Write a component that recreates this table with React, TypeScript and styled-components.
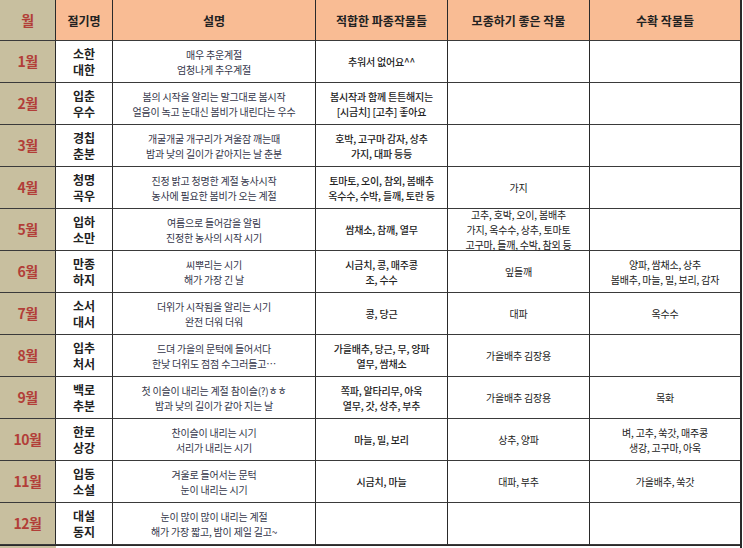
import styled, {createGlobalStyle} from "styled-components";

const GlobalStyle = createGlobalStyle`
  html, body {
    margin: 0;
    padding: 0;
    background: #ffffff;
  }
  body {
    font-family: "Noto Sans CJK KR", "Noto Sans", sans-serif;
  }
`

type Row = {
  month: string
  terms: string[]
  desc: string[]
  sow: string[]
  seedling: string[]
  harvest: string[]
}

const rows: Row[] = [
  {month: '1월', terms: ['소한', '대한'], desc: ['매우 추운계절', '엄청나게 추우계절'], sow: ['추워서 없어요^^'], seedling: [], harvest: []},
  {month: '2월', terms: ['입춘', '우수'], desc: ['봄의 시작을 알리는 말그대로 봄시작', '얼음이 녹고 눈대신 봄비가 내린다는 우수'], sow: ['봄시작과 함께 튼튼해지는', '[시금치] [고추] 좋아요'], seedling: [], harvest: []},
  {month: '3월', terms: ['경칩', '춘분'], desc: ['개굴개굴 개구리가 겨울잠 깨는때', '밤과 낮의 길이가 같아지는 날 춘분'], sow: ['호박, 고구마 감자, 상추', '가지, 대파 등등'], seedling: [], harvest: []},
  {month: '4월', terms: ['청명', '곡우'], desc: ['진정 밝고 청명한 계절 농사시작', '농사에 필요한 봄비가 오는 계절'], sow: ['토마토, 오이, 참외, 봄배추', '옥수수, 수박, 들깨, 토란 등'], seedling: ['가지'], harvest: []},
  {month: '5월', terms: ['입하', '소만'], desc: ['여름으로 들어감을 알림', '진정한 농사의 시작 시기'], sow: ['쌈채소, 참깨, 열무'], seedling: ['고추, 호박, 오이, 봄배추', '가지, 옥수수, 상추, 토마토', '고구마, 들깨, 수박, 참외 등'], harvest: []},
  {month: '6월', terms: ['만종', '하지'], desc: ['씨뿌리는 시기', '해가 가장 긴 날'], sow: ['시금치, 콩, 매주콩', '조, 수수'], seedling: ['잎들깨'], harvest: ['양파, 쌈채소, 상추', '봄배추, 마늘, 밀, 보리, 감자']},
  {month: '7월', terms: ['소서', '대서'], desc: ['더위가 시작됨을 알리는 시기', '완전 더워 더워'], sow: ['콩, 당근'], seedling: ['대파'], harvest: ['옥수수']},
  {month: '8월', terms: ['입추', '처서'], desc: ['드뎌 가을의 문턱에 들어서다', '한낮 더위도 점점 수그러들고…'], sow: ['가을배추, 당근, 무, 양파', '열무, 쌈채소'], seedling: ['가을배추 김장용'], harvest: []},
  {month: '9월', terms: ['백로', '추분'], desc: ['첫 이슬이 내리는 계절 참이슬(?)ㅎㅎ', '밤과 낮의 길이가 같아 지는 날'], sow: ['쪽파, 알타리무, 아욱', '열무, 갓, 상추, 부추'], seedling: ['가을배추 김장용'], harvest: ['목화']},
  {month: '10월', terms: ['한로', '상강'], desc: ['찬이슬이 내리는 시기', '서리가 내리는 시기'], sow: ['마늘, 밀, 보리'], seedling: ['상추, 양파'], harvest: ['벼, 고추, 쑥갓, 매주콩', '생강, 고구마, 아욱']},
  {month: '11월', terms: ['입동', '소설'], desc: ['겨울로 들어서는 문턱', '눈이 내리는 시기'], sow: ['시금치, 마늘'], seedling: ['대파, 부추'], harvest: ['가을배추, 쑥갓']},
  {month: '12월', terms: ['대설', '동지'], desc: ['눈이 많이 많이 내리는 계절', '해가 가장 짧고, 밤이 제일 길고~'], sow: [], seedling: [], harvest: []},
]

const Page = styled.div`
  width: 743px;
  height: 548px;
  overflow: hidden;
  background: #ffffff;
`

const Grid = styled.div`
  display: grid;
  grid-template-columns: 56px 57px 203px 132px 142px 150px;
  grid-template-rows: 41px repeat(12, 42px) 3px;
  width: 742px;
  border-right: 2px solid #2a2a2a;
  box-sizing: border-box;
`

type Kind = 'head' | 'month' | 'term' | 'desc' | 'crop' | 'plain'

const Cell = styled.div<{ kind?: Kind }>`
  display: flex;
  flex-direction: column;
  align-items: center;
  justify-content: center;
  text-align: center;
  box-sizing: border-box;
  border-right: 1px solid #2a2a2a;
  border-bottom: 1px solid #3a3a3a;
  background: ${({kind}) => kind === 'head' ? '#f9bc94' : kind === 'month' ? '#c8bf9f' : '#ffffff'};
  color: ${({kind}) => kind === 'desc' ? '#34364a' : '#222222'};
  font-size: ${({kind}) => kind === 'head' ? 12 : kind === 'term' ? 12 : 10}px;
  font-weight: ${({kind}) => kind === 'term' || kind === 'head' ? 700 : kind === 'crop' ? 500 : 400};
  line-height: ${({kind}) => kind === 'term' ? 16 : 15}px;
  white-space: nowrap;
  letter-spacing: ${({kind}) => kind === 'desc' || kind === 'crop' || kind === 'plain' ? '-0.2px' : '0'};

  > span {
    display: block;
  }
`

const MonthCell = styled(Cell)`
  color: #b23e38;
  font-size: 14px;
  font-weight: 700;
  letter-spacing: -0.5px;
`

const LastCell = styled(Cell)`
  border-right: none;
`

const BottomStrip = styled.div<{ beige?: boolean }>`
  border-top: 1px solid #2a2a2a;
  background: ${({beige}) => beige ? '#c8bf9f' : '#ffffff'};
  box-sizing: border-box;
  grid-column: ${({beige}) => beige ? '1 / 2' : '2 / 7'};
`

function Lines({items}: { items: string[] }) {
  return <>{items.map((t, i) => <span key={i}>{t}</span>)}</>
}

function RowCells({row}: { row: Row }) {
  return (
    <>
      <MonthCell kind="month">{row.month}</MonthCell>
      <Cell kind="term"><Lines items={row.terms}/></Cell>
      <Cell kind="desc"><Lines items={row.desc}/></Cell>
      <Cell kind="crop"><Lines items={row.sow}/></Cell>
      <Cell kind="plain"><Lines items={row.seedling}/></Cell>
      <LastCell kind="plain"><Lines items={row.harvest}/></LastCell>
    </>
  )
}

export default function App() {
  const headers = ['절기명', '설명', '적합한 파종작물들', '모종하기 좋은 작물']
  return (
    <Page>
      <GlobalStyle/>
      <Grid>
        <MonthCell kind="month">월</MonthCell>
        {headers.map(h => <Cell key={h} kind="head">{h}</Cell>)}
        <LastCell kind="head">수확 작물들</LastCell>
        {rows.map(r => (
          <RowCells key={r.month} row={r}/>
        ))}
        <BottomStrip beige/>
        <BottomStrip/>
      </Grid>
    </Page>
  )
}
